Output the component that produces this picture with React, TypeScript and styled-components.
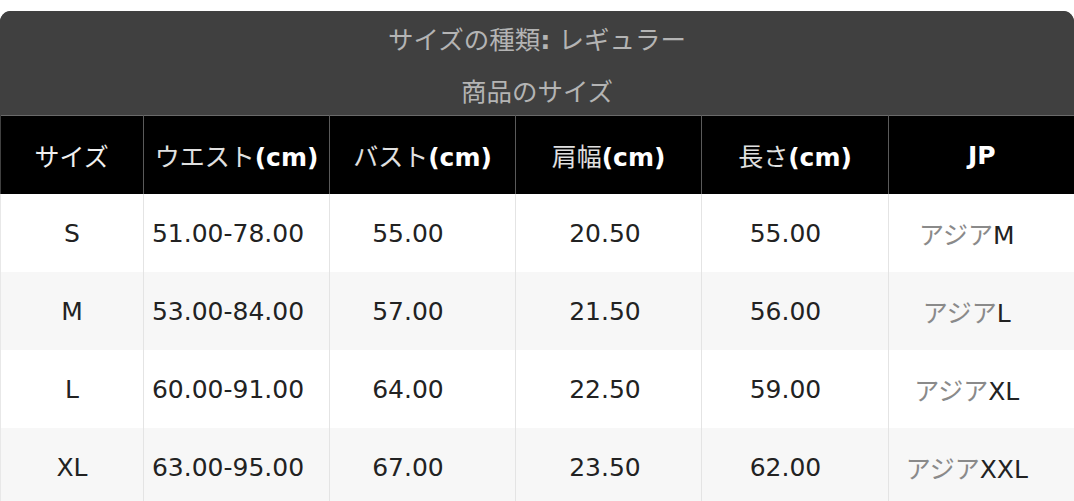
import React from "react";
import styled, { createGlobalStyle } from "styled-components";

const Global = createGlobalStyle`
  html, body { margin: 0; padding: 0; background: #ffffff; }
  body { font-family: "DejaVu Sans", "Noto Sans CJK JP", sans-serif; }
`;

const Page = styled.div`
  padding-top: 11px;
  width: 1074px;
`;

const Card = styled.div`
  border-radius: 11px 11px 0 0;
  overflow: hidden;
  background: #404040;
`;

const Caption = styled.div`
  height: 52px;
  display: flex;
  align-items: center;
  justify-content: center;
  color: #b4b4b4;
  font-size: 25.5px;
  background: #404040;
`;

const Kana = styled.span<{ $tone?: string }>`
  font-family: "Noto Sans CJK JP", sans-serif;
  font-weight: 400;
  color: ${(p) => p.$tone ?? "inherit"};
`;

const Table = styled.table`
  width: 1074px;
  border-collapse: collapse;
  table-layout: fixed;
  border-top: 1px solid #6a6a6a;
`;

const HeadCell = styled.th`
  background: #000000;
  color: #ffffff;
  font-size: 25px;
  font-weight: 700;
  height: 78px;
  padding: 0;
  text-align: center;
  border-left: 1px solid #5a5a5a;
  &:first-child { border-left: none; }
`;

const Row = styled.tr<{ $alt: boolean }>`
  background: ${(p) => (p.$alt ? "#f7f7f7" : "#ffffff")};
`;

const Cell = styled.td<{ $shift: number }>`
  height: 78px;
  padding: 0 ${(p) => p.$shift}px 0 0;
  text-align: center;
  font-size: 25px;
  color: #222222;
  border-left: 1px solid #e4e4e4;
  &:first-child { border-left: 1px solid #e8e8e8; }
`;

const widths = [143, 186, 186, 186, 187, 186];
const shifts = [0, 17, 29, 7, 19, 30];

const headers: React.ReactNode[] = [
  <Kana $tone="#f0f0f0">サイズ</Kana>,
  <>
    <Kana $tone="#e0e0e0">ウエスト</Kana>(cm)
  </>,
  <>
    <Kana $tone="#e0e0e0">バスト</Kana>(cm)
  </>,
  <>
    <Kana $tone="#e0e0e0">肩幅</Kana>(cm)
  </>,
  <>
    <Kana $tone="#e0e0e0">長さ</Kana>(cm)
  </>,
  "JP",
];

const rows = [
  ["S", "51.00-78.00", "55.00", "20.50", "55.00", "M"],
  ["M", "53.00-84.00", "57.00", "21.50", "56.00", "L"],
  ["L", "60.00-91.00", "64.00", "22.50", "59.00", "XL"],
  ["XL", "63.00-95.00", "67.00", "23.50", "62.00", "XXL"],
];

export default function App() {
  return (
    <Page>
      <Global />
      <Card>
        <Caption>
          <b>
            <Kana>サイズの種類</Kana>:
          </b>
          &nbsp;<Kana>レギュラー</Kana>
        </Caption>
        <Caption>
          <Kana>商品のサイズ</Kana>
        </Caption>
        <Table>
          <colgroup>
            {widths.map((w, i) => (
              <col key={i} style={{ width: w }} />
            ))}
          </colgroup>
          <thead>
            <tr>
              {headers.map((h, i) => (
                <HeadCell key={i}>{h}</HeadCell>
              ))}
            </tr>
          </thead>
          <tbody>
            {rows.map((r, ri) => (
              <Row key={ri} $alt={ri % 2 === 1}>
                {r.map((c, ci) => (
                  <Cell key={ci} $shift={shifts[ci]}>
                    {ci === 5 ? (
                      <>
                        <Kana $tone="#8a8a8a">アジア</Kana>
                        {c}
                      </>
                    ) : (
                      c
                    )}
                  </Cell>
                ))}
              </Row>
            ))}
          </tbody>
        </Table>
      </Card>
    </Page>
  );
}
